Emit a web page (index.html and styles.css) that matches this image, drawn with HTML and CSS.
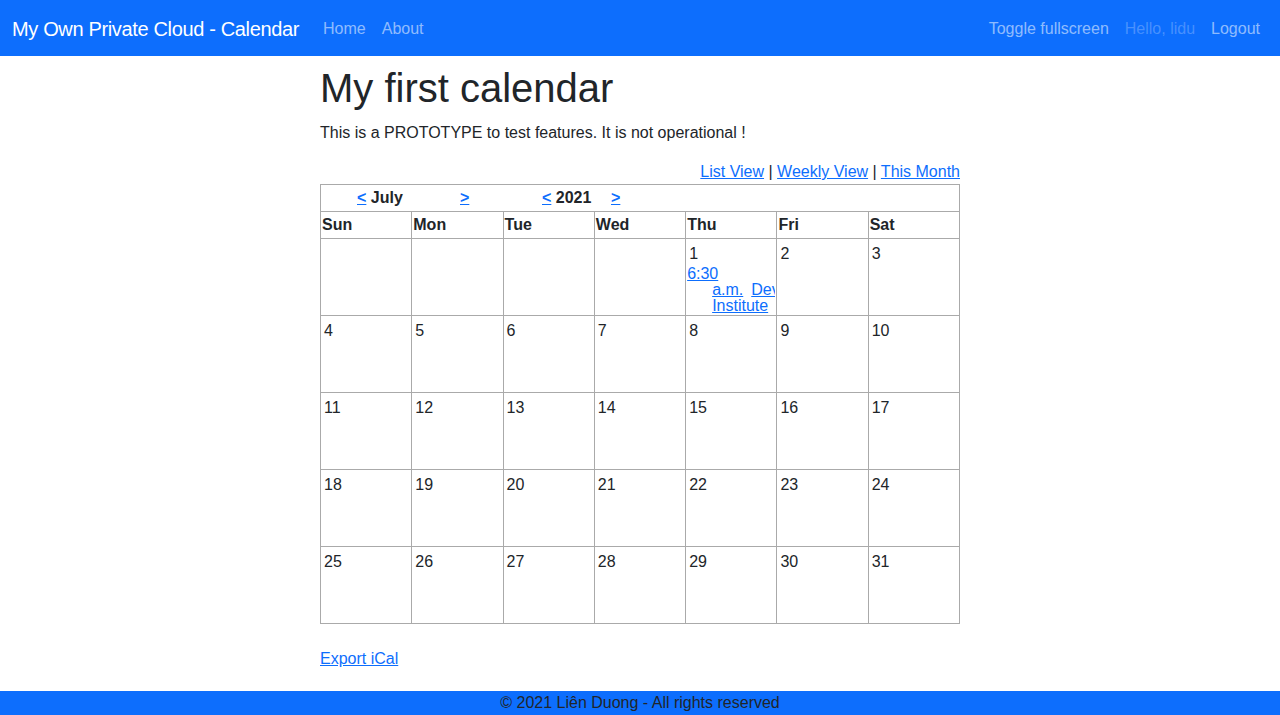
FILE: index.html
```html
<!DOCTYPE html>
<html lang="en">
<head>
<meta charset="utf-8">
<title>My Own Private Cloud - Calendar</title>
<link rel="stylesheet" href="styles.css">
</head>
<body>
<nav class="navbar">
  <a class="brand" href="#">My Own Private Cloud - Calendar</a>
  <ul class="nav">
    <li><a class="nav-link" href="#">Home</a></li>
    <li><a class="nav-link" href="#">About</a></li>
  </ul>
  <ul class="nav nav-right">
    <li><a class="nav-link" href="#">Toggle fullscreen</a></li>
    <li><span class="nav-link disabled">Hello, lidu</span></li>
    <li><a class="nav-link" href="#">Logout</a></li>
  </ul>
</nav>

<main class="main">
  <h1 class="title">My first calendar</h1>
  <p class="lead">This is a PROTOTYPE to test features. It is not operational !</p>

  <div class="views">
    <a href="#">List View</a> | <a href="#">Weekly View</a> | <a href="#">This Month</a>
  </div>

  <table class="cal">
    <tr>
      <th colspan="7" class="monthnav">
        <span class="nav-month"><a href="#">&lt;</a> July</span><span class="nav-next"><a href="#">&gt;</a></span><span class="nav-year"><a href="#">&lt;</a> 2021</span><span><a href="#">&gt;</a></span>
      </th>
    </tr>
    <tr class="days">
      <th>Sun</th><th>Mon</th><th>Tue</th><th>Wed</th><th>Thu</th><th>Fri</th><th>Sat</th>
    </tr>
    <tr class="week">
      <td></td><td></td><td></td><td></td>
      <td>
        <div class="day">1</div>
        <div class="event"><a href="#"><span class="l1">6:30</span><span class="l2">a.m.</span><span class="l2b">Dev</span><span class="l3">Institute</span></a></div>
      </td>
      <td><div class="day">2</div></td>
      <td><div class="day">3</div></td>
    </tr>
    <tr class="week">
      <td><div class="day">4</div></td><td><div class="day">5</div></td><td><div class="day">6</div></td><td><div class="day">7</div></td><td><div class="day">8</div></td><td><div class="day">9</div></td><td><div class="day">10</div></td>
    </tr>
    <tr class="week">
      <td><div class="day">11</div></td><td><div class="day">12</div></td><td><div class="day">13</div></td><td><div class="day">14</div></td><td><div class="day">15</div></td><td><div class="day">16</div></td><td><div class="day">17</div></td>
    </tr>
    <tr class="week">
      <td><div class="day">18</div></td><td><div class="day">19</div></td><td><div class="day">20</div></td><td><div class="day">21</div></td><td><div class="day">22</div></td><td><div class="day">23</div></td><td><div class="day">24</div></td>
    </tr>
    <tr class="week">
      <td><div class="day">25</div></td><td><div class="day">26</div></td><td><div class="day">27</div></td><td><div class="day">28</div></td><td><div class="day">29</div></td><td><div class="day">30</div></td><td><div class="day">31</div></td>
    </tr>
  </table>

  <p class="export"><a href="#">Export iCal</a></p>
</main>

<footer class="footer">© 2021 Liên Duong - All rights reserved</footer>
</body>
</html>
```

FILE: styles.css
```css
* { box-sizing: border-box; }

html, body { height: 100%; }

body {
  margin: 0;
  font-family: "Liberation Sans", Arial, sans-serif;
  font-size: 16px;
  line-height: 24px;
  color: #212529;
  background: #fff;
  display: flex;
  flex-direction: column;
  min-height: 715px;
}

a { color: #0d6efd; text-decoration: underline; }

.navbar {
  background: #0d6efd;
  height: 56px;
  padding: 9px 12px 7px;
  display: flex;
  align-items: center;
}

.brand {
  color: #fff;
  text-decoration: none;
  font-size: 20px;
  line-height: 30px;
  letter-spacing: -0.35px;
  padding: 5px 0;
  margin-right: 16px;
}

.nav {
  list-style: none;
  margin: 0;
  padding: 0;
  display: flex;
}

.nav-right { margin-left: auto; }

.nav-link {
  display: block;
  padding: 8px;
  color: rgba(255, 255, 255, 0.55);
  text-decoration: none;
}

.nav-link.disabled { color: rgba(255, 255, 255, 0.25); }

.main {
  width: 640px;
  margin: 0 auto;
  padding-top: 8px;
}

.title {
  font-size: 40px;
  font-weight: 500;
  line-height: 48px;
  margin: 0 0 9px;
}

.lead { margin: 0 0 15px; }

.views { text-align: right; }

.cal {
  width: 640px;
  border-collapse: collapse;
  table-layout: fixed;
}

.cal th, .cal td {
  border: 1px solid #aaa;
  padding: 1px;
  text-align: left;
  vertical-align: top;
}

.cal th { font-weight: 700; }

.monthnav { padding-left: 36px !important; }

.nav-month { display: inline-block; width: 103px; }
.nav-next { display: inline-block; width: 82px; }
.nav-year { display: inline-block; width: 69px; }

.week td { height: 77px; overflow: hidden; }

.day { padding: 2px 0 0 2px; }

.event {
  line-height: 16px;
  white-space: nowrap;
  overflow: hidden;
}

.event a { display: block; }
.event .l1 { display: block; }
.event .l2 { display: inline-block; margin-left: 25px; text-decoration: underline; }
.event .l2b { display: inline-block; margin-left: 8px; text-decoration: underline; }
.event .l3 { display: block; margin-left: 25px; }

.export { margin: 23px 0 0; }

.footer {
  margin-top: auto;
  background: #0d6efd;
  color: #212529;
  text-align: center;
  height: 24px;
  line-height: 24px;
}
```
